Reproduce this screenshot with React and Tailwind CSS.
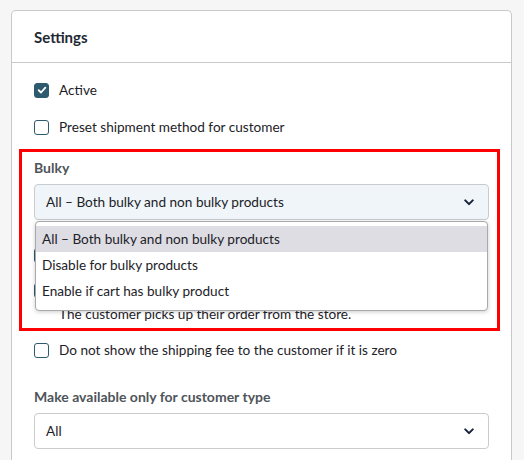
import { useState } from "react";

function Checkbox({ checked }) {
  return (
    <span
      className={`flex h-[15px] w-[15px] shrink-0 items-center justify-center rounded-[3px] border-[1.5px] border-[#2d5a6e] ${
        checked ? "bg-[#2d5a6e]" : "bg-white"
      }`}
    >
      {checked && (
        <svg viewBox="0 0 12 12" className="h-[10px] w-[10px]">
          <path
            d="M2 6.3 L4.8 9 L10 3.2"
            fill="none"
            stroke="white"
            strokeWidth="2.2"
            strokeLinecap="round"
            strokeLinejoin="round"
          />
        </svg>
      )}
    </span>
  );
}

function CheckRow({ checked, label, className = "" }) {
  return (
    <label className={`flex items-center gap-[10px] ${className}`}>
      <Checkbox checked={checked} />
      <span className="text-[13.6px] leading-[20px] text-[#1d2228]">{label}</span>
    </label>
  );
}

function Chevron() {
  return (
    <svg viewBox="0 0 12 8" className="h-[7px] w-[10px]">
      <path
        d="M1.5 1.5 L6 6 L10.5 1.5"
        fill="none"
        stroke="#16213a"
        strokeWidth="2.4"
        strokeLinecap="round"
        strokeLinejoin="round"
      />
    </svg>
  );
}

function SelectBox({ value, tinted }) {
  return (
    <div
      className={`flex h-[36px] items-center justify-between rounded-[4px] border border-[#c9cbce] pl-[11px] pr-[14px] ${
        tinted ? "bg-[#eff5f9]" : "bg-white"
      }`}
    >
      <span className="text-[13.6px] text-[#1d2228]">{value}</span>
      <Chevron />
    </div>
  );
}

const bulkyOptions = [
  "All – Both bulky and non bulky products",
  "Disable for bulky products",
  "Enable if cart has bulky product",
];

export default function App() {
  const [selected] = useState(0);

  return (
    <div
      className="min-h-[460px] overflow-hidden bg-[#f6f6f6] pl-[11px] pr-[12px] pt-[10px]"
      style={{ fontFamily: "Lato, 'Open Sans', sans-serif" }}
    >
      <div className="rounded-t-[5px] border border-b-0 border-[#c9c9cc] bg-white pb-[20px]">
        <div className="flex h-[52px] items-center border-b border-[#c9c9cc] px-[22px]">
          <h2 className="pt-[2px] text-[15px] font-bold text-[#1f2933]">Settings</h2>
        </div>

        <div className="px-[22px] pt-[17px]">
          <CheckRow checked label="Active" />
          <CheckRow label="Preset shipment method for customer" className="mt-[17px]" />

          <div className="-ml-[15px] -mr-[11px] mt-[12px] border-[3px] border-[#ff0000] pb-[4px] pl-[12px] pr-[8px] pt-[6px]">
            <div className="mb-[6px] text-[14px] font-bold leading-[20px] text-[#4f5459]">
              Bulky
            </div>

            <div className="relative">
              <SelectBox value={bulkyOptions[selected]} tinted />

              <div className="absolute left-[1px] right-[1px] top-[37px] z-10 rounded-[4px] border border-[#a9a9ad] bg-white pb-[6px] pt-[4px] shadow-[0_1px_4px_rgba(0,0,0,0.2)]">
                {bulkyOptions.map((option, index) => (
                  <div
                    key={option}
                    className={`flex h-[26px] items-center px-[6px] text-[13.6px] text-[#1d2228] ${
                      index === selected ? "bg-[#dedde3]" : ""
                    }`}
                  >
                    {option}
                  </div>
                ))}
              </div>

              <CheckRow label="Allow delivery on weekends" className="mt-[25px]" />
              <CheckRow label="Pick up in store" className="mt-[15px]" />
              <p className="ml-[25px] mt-[4px] text-[13.6px] leading-[20px] text-[#1d2228]">
                The customer picks up their order from the store.
              </p>
            </div>
          </div>

          <CheckRow
            label="Do not show the shipping fee to the customer if it is zero"
            className="mt-[9px]"
          />

          <div className="mt-[27px] mb-[6px] text-[14px] font-bold leading-[20px] text-[#4f5459]">
            Make available only for customer type
          </div>
          <SelectBox value="All" />
        </div>
      </div>
    </div>
  );
}
